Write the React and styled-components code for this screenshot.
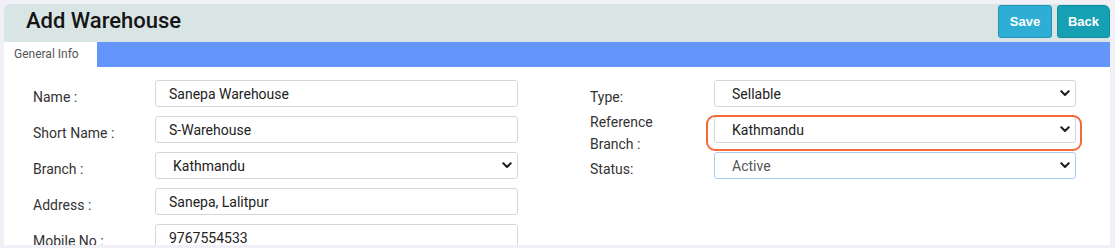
import React from "react";
import styled, { createGlobalStyle } from "styled-components";

const Global = createGlobalStyle`
  html, body { margin: 0; padding: 0; background: #f2f0f7; }
  body { font-family: Roboto, "Liberation Sans", Arial, sans-serif; }
  * { box-sizing: border-box; }
`;

const Card = styled.div`
  margin: 4px 5px 0 4px;
  width: 1106px;
  height: 241px;
  background: #ffffff;
  border-radius: 6px 6px 0 0;
  overflow: hidden;
`;

const Header = styled.div`
  height: 38px;
  background: #d9e4e5;
  display: flex;
  justify-content: space-between;
  align-items: flex-start;
`;

const Title = styled.h1`
  margin: 0;
  padding-left: 22px;
  font-size: 22px;
  line-height: 34px;
  font-weight: 500;
  color: #151515;
`;

const Actions = styled.div`
  display: flex;
  gap: 5px;
  padding-top: 1px;
`;

const Button = styled.button`
  height: 33px;
  width: ${(p) => p.$w}px;
  border: 1px solid ${(p) => p.$border};
  background: ${(p) => p.$bg};
  color: #fff;
  font-family: "Liberation Sans", Arial, sans-serif;
  font-weight: 700;
  font-size: 13px;
  border-radius: ${(p) => (p.$last ? "3px 6px 3px 3px" : "3px")};
  padding: 0;
  cursor: pointer;
`;

const TabBar = styled.div`
  height: 25px;
  display: flex;
  background: #6495fd;
`;

const Tab = styled.div`
  width: 93px;
  background: #ffffff;
  font-size: 12px;
  color: #555;
  line-height: 25px;
  padding-left: 10px;
`;

const Form = styled.div`
  display: flex;
  padding: 13px 0 0 29px;
  gap: 72px;
`;

const Column = styled.div`
  display: flex;
  flex-direction: column;
  gap: 9px;
`;

const Row = styled.div`
  display: flex;
  align-items: center;
  height: 27px;
`;

const Label = styled.label`
  width: ${(p) => p.$w}px;
  flex: none;
  font-size: 14px;
  line-height: 22px;
  color: #333;
  padding-top: 7px;
`;

const Input = styled.input`
  width: ${(p) => p.$w}px;
  height: 27px;
  border: 1px solid #d7d7d7;
  border-radius: 3px;
  padding: 0 0 0 13px;
  font-family: Roboto, "Liberation Sans", Arial, sans-serif;
  font-size: 14px;
  color: #222;
  background: #fff;
  outline: none;
`;

const SelectWrap = styled.div`
  position: relative;
  width: ${(p) => p.$w}px;
  height: 27px;
`;

const Select = styled.select`
  appearance: none;
  width: 100%;
  height: 27px;
  border: 1px solid ${(p) => (p.$focus ? "#a9ccf3" : "#d7d7d7")};
  border-radius: 3px;
  padding: 0 0 0 17px;
  font-family: Roboto, "Liberation Sans", Arial, sans-serif;
  font-size: 14px;
  color: ${(p) => (p.$muted ? "#555" : "#222")};
  background: #fff;
  outline: none;
`;

const Chevron = styled.svg`
  position: absolute;
  right: 6px;
  top: 10px;
  width: 10px;
  height: 7px;
  pointer-events: none;
`;

const Highlight = styled.div`
  position: absolute;
  top: -1px;
  left: -8px;
  right: -6px;
  bottom: -8px;
  border: 2px solid #f4693a;
  border-radius: 9px;
  pointer-events: none;
`;

const Arrow = () => (
  <Chevron viewBox="0 0 10 7">
    <path d="M1.3 1.3 L5 5 L8.7 1.3" fill="none" stroke="#222" strokeWidth="2.1" strokeLinecap="round" strokeLinejoin="round" />
  </Chevron>
);

const SelectField = ({ w, value, muted, focus, highlight }) => (
  <SelectWrap $w={w}>
    <Select $muted={muted} $focus={focus} defaultValue={value}>
      <option>{value}</option>
    </Select>
    <Arrow />
    {highlight && <Highlight />}
  </SelectWrap>
);

export default function App() {
  return (
    <>
      <Global />
      <Card>
        <Header>
          <Title>Add Warehouse</Title>
          <Actions>
            <Button $w={54} $bg="#2eadd5" $border="#2294b9">Save</Button>
            <Button $w={53} $bg="#16a0b4" $border="#128d9f" $last>Back</Button>
          </Actions>
        </Header>
        <TabBar>
          <Tab>General Info</Tab>
        </TabBar>
        <Form>
          <Column>
            <Row>
              <Label $w={122}>Name :</Label>
              <Input $w={363} defaultValue="Sanepa Warehouse" />
            </Row>
            <Row>
              <Label $w={122}>Short Name :</Label>
              <Input $w={363} defaultValue="S-Warehouse" />
            </Row>
            <Row>
              <Label $w={122}>Branch :</Label>
              <SelectField w={363} value="Kathmandu" />
            </Row>
            <Row>
              <Label $w={122}>Address :</Label>
              <Input $w={363} defaultValue="Sanepa, Lalitpur" />
            </Row>
            <Row>
              <Label $w={122}>Mobile No :</Label>
              <Input $w={363} defaultValue="9767554533" />
            </Row>
          </Column>
          <Column>
            <Row>
              <Label $w={124}>Type:</Label>
              <SelectField w={362} value="Sellable" />
            </Row>
            <Row>
              <Label $w={124}>Reference<br />Branch :</Label>
              <SelectField w={362} value="Kathmandu" highlight />
            </Row>
            <Row>
              <Label $w={124}>Status:</Label>
              <SelectField w={362} value="Active" muted focus />
            </Row>
          </Column>
        </Form>
      </Card>
    </>
  );
}
